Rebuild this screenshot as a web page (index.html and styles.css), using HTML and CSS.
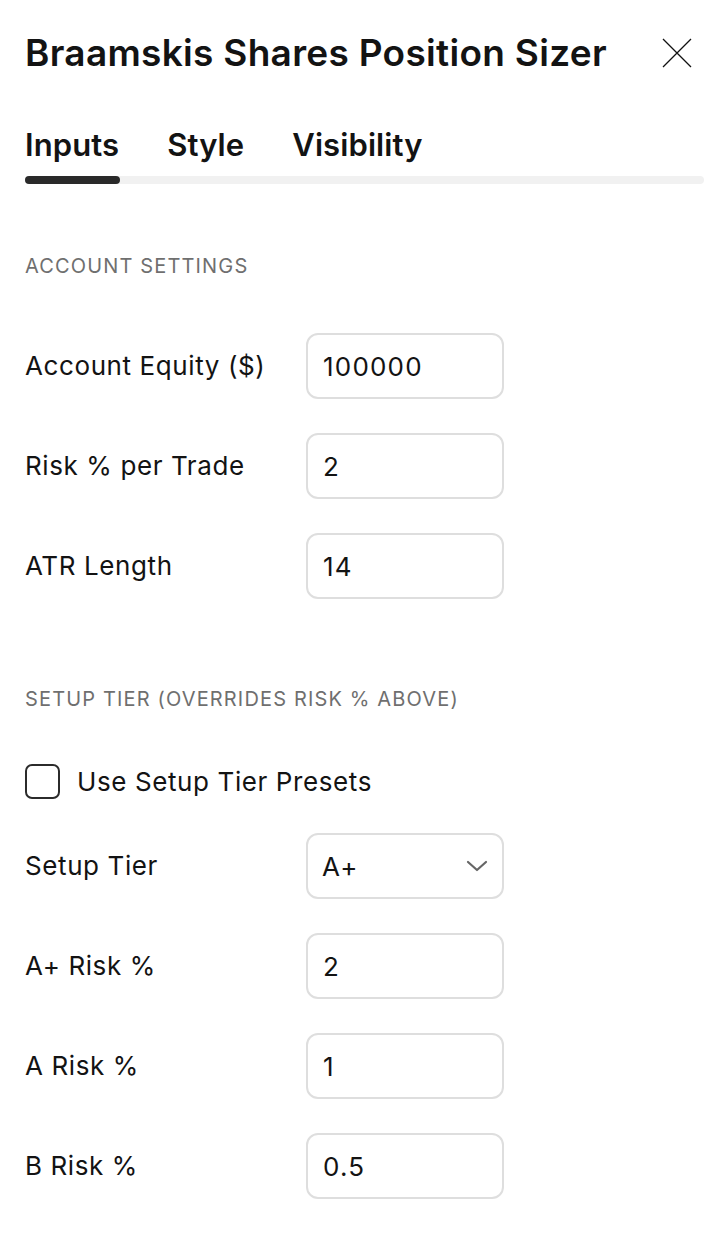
FILE: index.html
```html
<!DOCTYPE html>
<html lang="en">
<head>
<meta charset="utf-8">
<title>Braamskis Shares Position Sizer</title>
<link rel="stylesheet" href="styles.css">
</head>
<body>
<div class="panel">
  <div class="header">
    <h1 class="title">Braamskis Shares Position Sizer</h1>
    <button class="close" aria-label="Close">
      <svg width="30" height="30" viewBox="0 0 30 30"><path d="M1 1 L29 29 M29 1 L1 29" stroke="#111" stroke-width="1.3" fill="none"/></svg>
    </button>
  </div>

  <div class="tabs">
    <span class="tab active">Inputs</span>
    <span class="tab">Style</span>
    <span class="tab">Visibility</span>
  </div>
  <div class="tabbar"><div class="tabbar-active"></div></div>

  <div class="section-title first">ACCOUNT SETTINGS</div>
  <div class="rows">
    <div class="row"><span class="label">Account Equity ($)</span><input class="field" type="text" value="100000"></div>
    <div class="row"><span class="label">Risk % per Trade</span><input class="field" type="text" value="2"></div>
    <div class="row"><span class="label">ATR Length</span><input class="field" type="text" value="14"></div>
  </div>

  <div class="section-title second">SETUP TIER (OVERRIDES RISK % ABOVE)</div>
  <div class="rows">
    <div class="check-row"><span class="checkbox"></span><span class="label">Use Setup Tier Presets</span></div>
    <div class="row"><span class="label">Setup Tier</span>
      <div class="field select"><span>A+</span>
        <svg class="chev" width="22" height="12" viewBox="0 0 22 12"><path d="M2 2 L11 10 L20 2" stroke="#666" stroke-width="2.2" fill="none" stroke-linecap="round" stroke-linejoin="round"/></svg>
      </div>
    </div>
    <div class="row"><span class="label">A+ Risk %</span><input class="field" type="text" value="2"></div>
    <div class="row"><span class="label">A Risk %</span><input class="field" type="text" value="1"></div>
    <div class="row"><span class="label">B Risk %</span><input class="field" type="text" value="0.5"></div>
  </div>
</div>
</body>
</html>
```

FILE: styles.css
```css
* { box-sizing: border-box; }
html, body { margin: 0; padding: 0; background: #fff; }
body {
  font-family: Inter, "Noto Sans", "Liberation Sans", sans-serif;
  color: #131313;
}
.panel {
  padding: 31px 22px 0 25px;
  display: flex;
  flex-direction: column;
}
.header {
  display: flex;
  align-items: center;
  justify-content: space-between;
  height: 44px;
}
.title {
  margin: 0;
  font-size: 37px;
  line-height: 44px;
  font-weight: 600;
  letter-spacing: 0.3px;
}
.close {
  background: none;
  border: 0;
  padding: 0;
  margin-right: 12px;
  width: 30px;
  height: 30px;
  display: flex;
}
.tabs {
  margin-top: 52px;
  display: flex;
  gap: 48px;
  height: 36px;
}
.tab {
  font-size: 31px;
  line-height: 36px;
  font-weight: 600;
  letter-spacing: 0.1px;
  color: #131313;
}
.tabbar {
  margin-top: 13px;
  height: 8px;
  border-radius: 4px;
  background: #f1f1f1;
}
.tabbar-active {
  width: 95px;
  height: 8px;
  border-radius: 4px;
  background: #2a2a2a;
}
.section-title {
  font-size: 20px;
  line-height: 24px;
  color: #6f6f6f;
  letter-spacing: 1.15px;
}
.section-title.first { margin-top: 70px; }
.section-title.second { margin-top: 88px; }
.rows {
  margin-top: 55px;
  display: flex;
  flex-direction: column;
  gap: 34px;
}
.second + .rows { margin-top: 53px; }
.row {
  display: flex;
  align-items: center;
  height: 66px;
}
.label {
  font-size: 26px;
  line-height: 32px;
  letter-spacing: 0.6px;
  color: #131313;
}
.row .label { width: 281px; flex: none; }
.field {
  width: 198px;
  height: 66px;
  flex: none;
  border: 2px solid #dedede;
  border-radius: 12px;
  padding: 0 15px;
  font-family: inherit;
  font-size: 26px;
  letter-spacing: 1.2px;
  color: #131313;
  background: #fff;
  outline: none;
}
.select {
  display: flex;
  align-items: center;
  justify-content: space-between;
  padding: 0 14px 0 14px;
}
.check-row {
  display: flex;
  align-items: center;
  gap: 17px;
  height: 35px;
}
.checkbox {
  width: 35px;
  height: 35px;
  border: 2px solid #2b2b2b;
  border-radius: 7px;
  display: block;
}
```
